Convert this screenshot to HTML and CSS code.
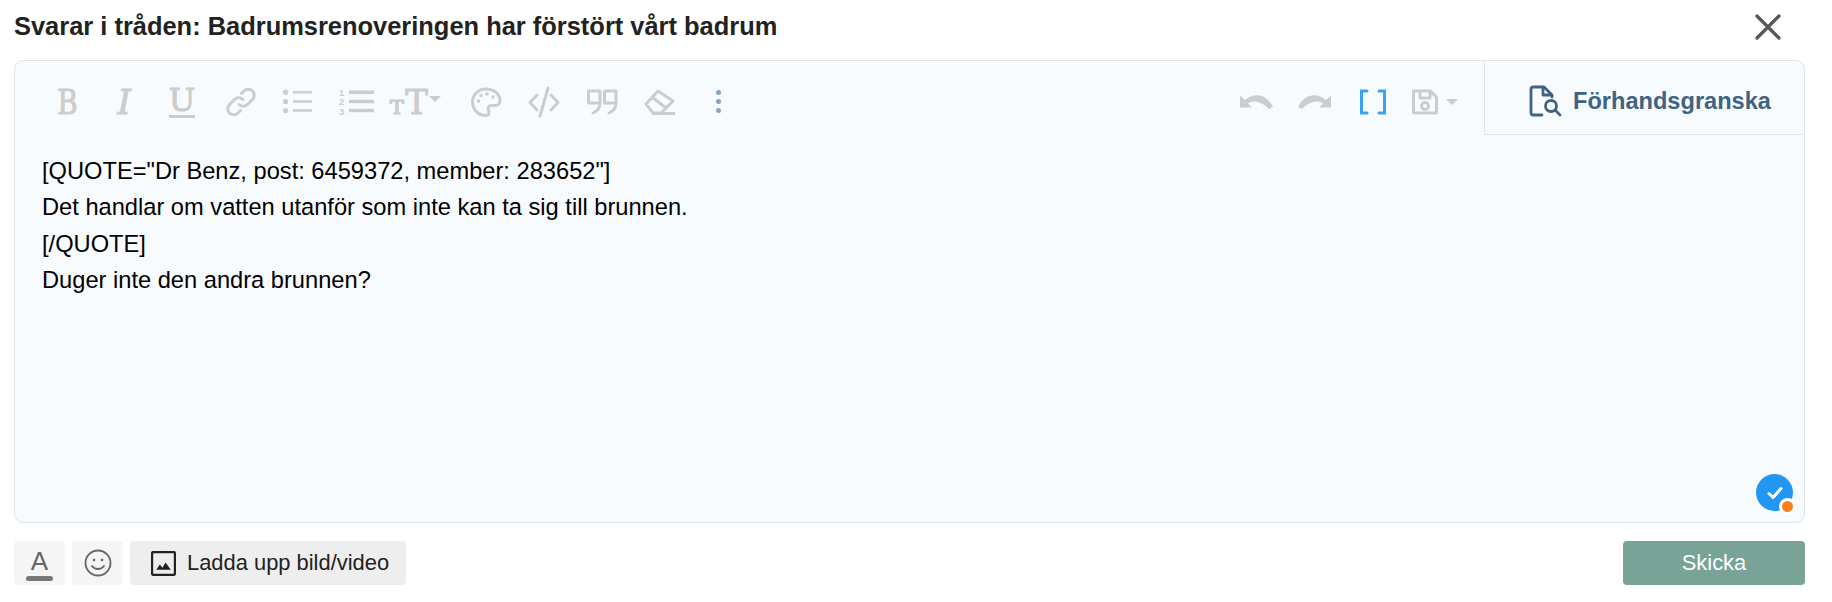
FILE: index.html
```html
<!DOCTYPE html>
<html lang="sv">
<head>
<meta charset="utf-8">
<title>Svara</title>
<link rel="stylesheet" href="styles.css">
</head>
<body>
<div class="dialog">
  <header class="head">
    <h1 class="title">Svarar i tråden: Badrumsrenoveringen har förstört vårt badrum</h1>
    <svg class="close" viewBox="0 0 28 28"><path d="M3 3L25 25M25 3L3 25"/></svg>
  </header>
  <section class="editor">
    <div class="toolbar">
      <div class="tools">
        <span class="tool"><span class="glyph bold">B</span></span>
        <span class="tool"><span class="glyph italic">I</span></span>
        <span class="tool tool-under"><span class="glyph under">U</span><span class="under-bar"></span></span>
        <span class="tool tool-link"><svg class="ico" viewBox="0 0 32 32"><path d="M14 18.5a6 6 0 0 0 8.500 0l5-5a6 6 0 0 0-8.500-8.500l-2.500 2.500M18 13.500a6 6 0 0 0-8.500 0l-5 5a6 6 0 0 0 8.500 8.500l2.500-2.500"/></svg></span>
        <span class="tool"><svg class="ico" viewBox="0 0 32 32"><circle class="fill" cx="1.600" cy="6.200" r="2.600"/><circle class="fill" cx="1.600" cy="15.500" r="2.600"/><circle class="fill" cx="1.600" cy="24.500" r="2.600"/><path class="thin" d="M9 6.200H28M9 15.500H28M9 24.500H28"/></svg></span>
        <span class="tool"><svg class="ico wide" viewBox="0 0 38 32"><text class="digit" x="0" y="9.500">1</text><text class="digit" x="0" y="19">2</text><text class="digit" x="0" y="28.500">3</text><path class="thick" d="M10 6.200H35M10 15.500H35M10 24.500H35"/></svg></span>
        <span class="tool tool-size"><span class="tt"><span class="glyph small-t">T</span><span class="glyph big-t">T</span></span><span class="caret caret-size"></span></span>
        <span class="tool"><svg class="ico" viewBox="0 0 32 32"><path d="M16 3C8 3 2.500 9 2.500 16s5.500 13.500 13 13.500c2.500 0 3.500-1.500 3.500-3 0-2-1-2.500-1-4 0-1.800 1.500-3 3-3h4c3 0 5-2 5-5C30 8 24 3 16 3z"/><circle class="fill" cx="8.500" cy="15" r="1.800"/><circle class="fill" cx="11" cy="9.500" r="1.800"/><circle class="fill" cx="17" cy="8" r="1.800"/><circle class="fill" cx="23" cy="11" r="1.800"/></svg></span>
        <span class="tool"><svg class="ico" viewBox="0 0 32 32"><path d="M9 9L2 16.500l7 7.500M23 9l7 7.500-7 7.500M20 2l-8 28"/></svg></span>
        <span class="tool"><svg class="ico" viewBox="0 0 32 32"><path d="M2.500 5H14V17c0 4.500-2.500 8-7 10M14 17H2.500V5M18.500 5H30V17c0 4.500-2.500 8-7 10M30 17H18.500V5"/></svg></span>
        <span class="tool"><svg class="ico" viewBox="0 0 32 32"><path d="M2 18L14 5l15 10-12 12H9zM8 11l14 11M9 27.500h21"/></svg></span>
        <span class="tool"><span class="dots"><i></i><i></i><i></i></span></span>
      </div>
      <div class="tools-right">
        <span class="tool"><svg class="ico undo" viewBox="0 0 34 32"><path class="fill" d="M0 9.500V21.500H12L8 17.500C12 14.500 20 14 29 23L33 21C26 7 14 6.500 5 14Z"/></svg></span>
        <span class="tool"><svg class="ico undo" viewBox="0 0 34 32"><path class="fill" d="M33 9.500V21.500H21L25 17.500C21 14.500 13 14 4 23L0 21C7 7 19 6.500 28 14Z"/></svg></span>
        <span class="tool"><svg class="ico" viewBox="0 0 32 32"><path class="blue" d="M10 5H4.500V27H10M22 5H27.500V27H22"/></svg></span>
        <span class="tool tool-save"><svg class="ico-save" viewBox="0 0 28 28"><path d="M2.500 3h17l6 6v15a1 1 0 0 1-1 1H3.500a1 1 0 0 1-1-1zM9 3v7h10V3"/><circle cx="14" cy="18" r="3.500"/></svg><span class="caret"></span></span>
      </div>
      <div class="preview">
        <svg class="preview-ico" viewBox="0 0 34 32"><path d="M14 30H5a2 2 0 0 1-2-2V4a2 2 0 0 1 2-2h11l8 8v2M15 3v7h8"/><circle cx="23" cy="21" r="5.500"/><path d="M27 25l5 5"/></svg>
        <span>Förhandsgranska</span>
      </div>
    </div>
    <div class="content">
      <p>[QUOTE="Dr Benz, post: 6459372, member: 283652"]</p>
      <p>Det handlar om vatten utanför som inte kan ta sig till brunnen.</p>
      <p>[/QUOTE]</p>
      <p>Duger inte den andra brunnen?</p>
    </div>
    <div class="badge">
      <svg class="check" viewBox="0 0 20 20"><path d="M4 10.500l4 4 8-9"/></svg>
      <span class="dot"></span>
    </div>
  </section>
  <footer class="foot">
    <div class="foot-left">
      <button class="btn light square"><span class="font-a">A</span><span class="font-bar"></span></button>
      <button class="btn light square"><svg class="smile" viewBox="0 0 28 28"><circle cx="14" cy="14" r="12.500"/><circle class="eye" cx="10" cy="11" r="1.300"/><circle class="eye" cx="18" cy="11" r="1.300"/><path d="M8 17c3 4 9 4 12 0"/></svg></button>
      <button class="btn upload"><svg class="pic" viewBox="0 0 24 24"><rect x="1" y="1" width="22" height="22" rx="1.500"/><path class="pic-fill" d="M5 18l3.500-5 2.500 3 3-5 5 7z"/></svg>Ladda upp bild/video</button>
    </div>
    <button class="send">Skicka</button>
  </footer>
</div>
</body>
</html>
```
FILE: styles.css
```css
* { box-sizing: border-box; }
html, body { margin: 0; padding: 0; background: #fff; }
body { font-family: "Liberation Sans", Arial, sans-serif; color: #222; }
.dialog { width: 1832px; height: 602px; padding: 0 27px 0 14px; }
.head { height: 60px; display: flex; align-items: center; justify-content: space-between; padding-bottom: 7px; }
.title { margin: 0; font-size: 25.440px; font-weight: 700; color: #222; }
.close { width: 28px; height: 28px; margin-right: 23px; fill: none; stroke: #555; stroke-width: 3.200; stroke-linecap: round; }
.editor { position: relative; height: 463px; background: #f8fbfe; border: 1px solid #e2e4e6; border-radius: 9px; }
.toolbar { display: flex; height: 74px; }
.tools { display: flex; padding: 7px 0 0 23px; flex: 1; }
.tools-right { display: flex; padding-top: 7px; margin-right: 16px; }
.tool { width: 58.200px; height: 67px; display: flex; align-items: center; justify-content: center; color: #ccc; flex: none; }
.tool svg { fill: none; stroke: #ccc; stroke-width: 3; stroke-linecap: round; stroke-linejoin: round; overflow: visible; }
.tool-link { padding-right: 2px; }
.ico { width: 32px; height: 32px; }
.ico.wide { width: 38px; }
.ico.undo { width: 34px; }
.ico-save { width: 28px; height: 28px; }
.tool svg .fill { fill: #ccc; stroke: none; }
.tool svg .thin { stroke-width: 2.600; stroke-linecap: butt; }
.tool svg .thick { stroke-width: 3.400; stroke-linecap: butt; }
.tool svg .blue { stroke: #3aa3f0; stroke-width: 3; stroke-linejoin: miter; }
.tool svg .digit { font: 700 9.500px "Liberation Sans", sans-serif; fill: #ccc; stroke: none; }
.glyph { font-family: "DejaVu Serif", serif; line-height: 1; font-size: 34px; -webkit-text-stroke: 1px #ccc; display: block; }
.bold { transform: scaleX(0.820); }
.italic { font-style: italic; padding-right: 2px; }
.tool-under { flex-direction: column; padding-right: 3px; }
.under { font-size: 32px; line-height: 25px; margin-top: 2px; }
.under-bar { width: 26px; height: 3px; background: #ccc; margin-top: 2px; }
.tool-size { width: 69.500px; justify-content: flex-start; padding-left: 3px; }
.tt { display: flex; align-items: baseline; }
.small-t { font-size: 18px; -webkit-text-stroke: 1.200px #ccc; margin-right: 2px; margin-left: 1px; transform: scaleX(1.150); }
.big-t { font-size: 34px; }
.caret { width: 0; height: 0; border: 6.500px solid transparent; border-top: 6.500px solid #ccc; border-bottom: 0; }
.caret-size { margin-left: 1px; margin-top: -6px; }
.tool-save { width: 66px; gap: 7px; padding-right: 1px; }
.dots { display: flex; flex-direction: column; gap: 3.800px; }
.dots i { width: 5.400px; height: 5.400px; border-radius: 50%; background: #8ba4ba; display: block; }
.preview { width: 320px; height: 74px; display: flex; align-items: center; gap: 11px; padding: 7px 0 0 43px; border-left: 1px solid #e2e4e6; border-bottom: 1px solid #e2e4e6; font-size: 23.600px; font-weight: 700; color: #3f6382; white-space: nowrap; }
.preview-ico { width: 34px; height: 32px; fill: none; stroke: #3f6382; stroke-width: 2.800; stroke-linecap: round; stroke-linejoin: round; overflow: visible; }
.content { padding: 18px 27px; font-size: 23.660px; line-height: 36.400px; color: #000; }
.content p { margin: 0; }
.badge { position: absolute; left: 1741px; top: 413px; width: 37px; height: 37px; background: #2196f3; border-radius: 50%; display: flex; align-items: center; justify-content: center; }
.check { width: 20px; height: 20px; fill: none; stroke: #fff; stroke-width: 3; stroke-linecap: round; stroke-linejoin: round; }
.dot { position: absolute; right: -3px; bottom: -4px; width: 17px; height: 17px; background: #f77f1f; border: 3px solid #fff; border-radius: 50%; }
.foot { display: flex; justify-content: space-between; margin-top: 18px; }
.foot-left { display: flex; gap: 7px; }
.btn { height: 44px; border: 0; border-radius: 4px; padding: 0; display: flex; align-items: center; justify-content: center; font-family: inherit; color: #222; }
.light.square { width: 51px; background: #f5f5f5; flex-direction: column; }
.upload { width: 276px; background: #eee; font-size: 21.900px; gap: 11px; justify-content: flex-start; padding-left: 21px; }
.font-a { font-size: 26px; color: #666; line-height: 26px; margin-top: 2px; }
.font-bar { width: 27px; height: 5px; border-radius: 3px; background: #777; margin-top: 2px; }
.smile { width: 28px; height: 28px; fill: none; stroke: #666; stroke-width: 1.800; stroke-linecap: round; }
.smile .eye { fill: #666; stroke: none; }
.pic { width: 25px; height: 25px; fill: none; stroke: #222; stroke-width: 2.200; }
.pic .pic-fill { fill: #222; stroke: none; }
.send { width: 182px; height: 44px; border: 0; border-radius: 4px; background: #78a396; color: #fff; font-family: inherit; font-size: 21.900px; }
```
